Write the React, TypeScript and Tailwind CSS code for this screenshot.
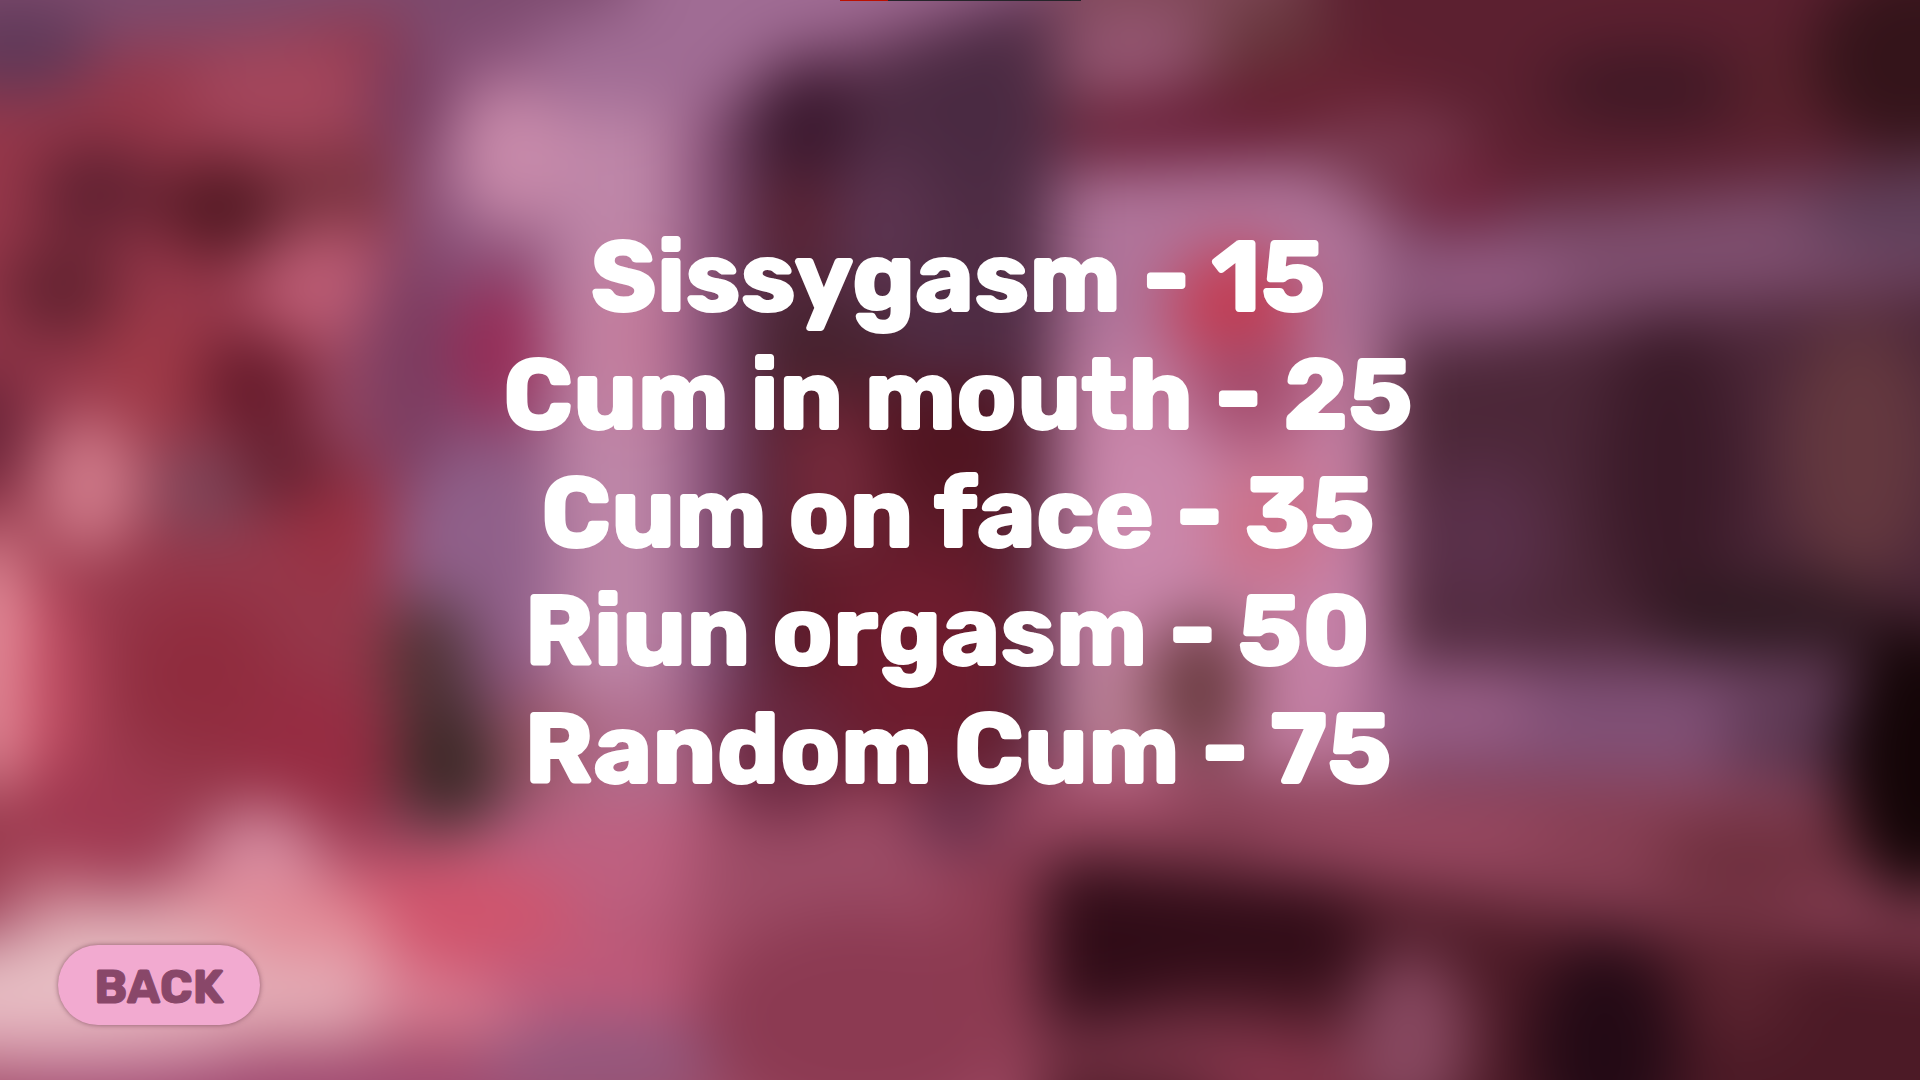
import { useState } from 'react';

type Reward = { label: string; cost: number; tail?: string };
type Blob = [cx: number, cy: number, rx: number, ry: number, color: string];
type Shape = [points: string, color: string];

const rewards: Reward[] = [
    { label: 'Sissygasm', cost: 15 },
    { label: 'Cum in mouth', cost: 25 },
    { label: 'Cum on face', cost: 35 },
    { label: 'Riun orgasm', cost: 50, tail: ' ' },
    { label: 'Random Cum', cost: 75 },
];

// Large areas of the room, back to front
const shapes: Shape[] = [
    // wall
    ['-200,-200 2120,-200 2120,1280 -200,1280', '#8a527a'],
    ['550,-200 760,-200 760,820 550,820', '#be86a8'],
    ['440,-200 1100,-200 1080,-40 760,60 720,110 560,110', '#a06c94'],
    ['380,-200 700,-200 620,10 380,50', '#7c4a6e'],
    ['680,120 780,70 780,820 680,820', '#885078'],
    ['1030,150 1400,150 1400,790 1030,790', '#c480a4'],
    ['1030,150 1400,150 1400,360 1030,360', '#b0749a'],
    // poster
    ['-200,70 200,40 400,10 395,900 -200,1000', '#96374a'],
    // door
    ['738,100 960,20 1055,-10 1055,800 738,800', '#4f2c44'],
    ['765,380 1020,380 1020,800 765,820', '#5c1a28'],
    // shelf
    ['1055,-200 2120,-200 2120,150 1660,200 1400,215 1300,160 1060,170', '#5c2030'],
    ['1055,-200 1330,-200 1300,60 1060,110', '#804858'],
    // beam and screen
    ['1380,230 1640,200 2120,140 2120,270 1640,305 1380,345', '#7e4e6e'],
    ['1385,350 1650,312 2120,265 2120,670 1390,660', '#4c2738'],
    ['1370,665 1850,665 1850,780 1370,760', '#805076'],
    // floor and table
    ['-200,980 240,810 400,830 720,790 1060,770 1060,1280 -200,1280', '#a04a64'],
    ['1050,765 1400,775 1850,780 2120,900 2120,970 1500,915 1050,855', '#883f54'],
    ['1040,856 1320,878 1520,910 2120,970 2120,1280 1040,1280', '#4c1a26'],
    ['1040,860 1350,890 1360,985 1180,985 1120,1030 1040,1020', '#300c17'],
];

// Smaller spots of light and shade
const blobs: Blob[] = [
    [120, -10, 280, 45, '#7c4a6c'],
    [15, 50, 85, 45, '#5e3858'],
    [285, 95, 100, 55, '#a4465c'],
    [96, 190, 62, 46, '#5e2030'],
    [225, 208, 66, 48, '#501822'],
    [330, 190, 66, 40, '#78323f'],
    [62, 290, 60, 50, '#622230'],
    [325, 285, 76, 58, '#bc5c74'],
    [150, 370, 54, 64, '#a03a48'],
    [252, 385, 56, 48, '#641a2a'],
    [360, 395, 44, 64, '#9a4a66'],
    [-20, 430, 50, 66, '#6a2438'],
    [88, 485, 54, 70, '#d07a8a'],
    [205, 490, 54, 46, '#7e465a'],
    [288, 468, 54, 40, '#642030'],
    [345, 530, 52, 50, '#9a3042'],
    [405, 100, 36, 60, '#743a5c'],
    [408, 370, 44, 130, '#7a3c60'],
    [508, 155, 56, 76, '#c88aaa'],
    [500, 350, 48, 76, '#962c56'],
    [635, 340, 44, 90, '#c47c9c'],
    [475, 560, 84, 110, '#90608a'],
    [805, 125, 50, 66, '#3a182e'],
    [980, 110, 80, 80, '#4a2a42'],
    [880, 230, 50, 80, '#5c3450'],
    [798, 225, 34, 60, '#5a2030'],
    [820, 345, 76, 50, '#46222e'],
    [950, 440, 80, 60, '#501420'],
    [835, 480, 44, 80, '#782c3e'],
    [920, 660, 90, 110, '#6e1c2e'],
    [1130, 52, 76, 46, '#955672'],
    [1275, 50, 60, 60, '#68383e'],
    [1180, 130, 120, 34, '#681e36'],
    [1330, 95, 100, 40, '#662030'],
    [1390, 145, 90, 28, '#804058'],
    [1460, 198, 60, 28, '#701e36'],
    [1650, 88, 110, 40, '#3e1824'],
    [1775, 85, 42, 50, '#5a222c'],
    [1920, 60, 110, 100, '#34141a'],
    [1235, 310, 66, 64, '#c43c52'],
    [1250, 390, 64, 56, '#a44c6c'],
    [1150, 520, 70, 100, '#ca88ac'],
    [1270, 525, 60, 62, '#cc7088'],
    [1350, 600, 34, 90, '#c884ac'],
    [1200, 690, 52, 76, '#6c3c42'],
    [1110, 710, 36, 50, '#ba8294'],
    [1480, 285, 90, 34, '#965c84'],
    [1920, 215, 120, 40, '#5c3e58'],
    [1480, 540, 70, 80, '#5a304a'],
    [1670, 470, 70, 160, '#3a1a28'],
    [1860, 450, 76, 130, '#64383f'],
    [1770, 620, 120, 40, '#2c181f'],
    [1450, 705, 90, 36, '#9c6088'],
    [1790, 735, 70, 50, '#5c3852'],
    [1920, 760, 84, 140, '#140507'],
    [-10, 660, 34, 140, '#f09ca8'],
    [50, 700, 36, 130, '#c04c62'],
    [200, 675, 80, 80, '#902c3e'],
    [310, 760, 76, 84, '#962c42'],
    [95, 820, 80, 60, '#a03850'],
    [430, 665, 44, 70, '#4c3234'],
    [452, 765, 58, 66, '#3a2826'],
    [550, 745, 60, 50, '#985464'],
    [640, 750, 70, 60, '#b06c8c'],
    [780, 750, 70, 70, '#6a2840'],
    [600, 865, 160, 66, '#be6080'],
    [800, 870, 120, 50, '#9c4c66'],
    [420, 920, 160, 60, '#d0546c'],
    [262, 860, 62, 56, '#d48ca2'],
    [250, 930, 140, 56, '#e28a96'],
    [130, 960, 130, 56, '#e0aeb6'],
    [40, 1000, 180, 60, '#e8c2c6'],
    [290, 1000, 180, 44, '#e4acb6'],
    [470, 1005, 110, 34, '#d87c92'],
    [50, 890, 60, 20, '#c87888'],
    [60, 1035, 200, 30, '#e4b0bc'],
    [280, 1096, 300, 34, '#a04a74'],
    [590, 980, 110, 44, '#c05a7a'],
    [610, 1060, 130, 44, '#94587e'],
    [960, 815, 54, 40, '#68304c'],
    [860, 1020, 160, 110, '#8c3a52'],
    [990, 950, 40, 110, '#8c3a50'],
    [1110, 795, 90, 28, '#a8506c'],
    [1400, 838, 160, 28, '#9c4a64'],
    [1750, 860, 100, 40, '#6c2e3c'],
    [1180, 1050, 150, 36, '#7a3448'],
    [1290, 1085, 90, 50, '#84344a'],
    [1410, 1040, 60, 90, '#884860'],
    [1605, 1050, 74, 110, '#230a15'],
    [1740, 980, 50, 60, '#5c2430'],
];

const RoomBackdrop = () => (
    <svg
        className="absolute inset-0 -z-10 h-full w-full"
        viewBox="0 0 1920 1080"
        preserveAspectRatio="none"
        aria-hidden="true"
    >
        <defs>
            <filter id="soft" filterUnits="userSpaceOnUse" x="-200" y="-200" width="2320" height="1480" colorInterpolationFilters="sRGB">
                <feGaussianBlur stdDeviation="32" />
            </filter>
        </defs>
        <g filter="url(#soft)">
            {shapes.map(([points, color]) => (
                <polygon key={points} points={points} fill={color} />
            ))}
            {blobs.map(([cx, cy, rx, ry, color]) => (
                <ellipse key={`${cx}-${cy}`} cx={cx} cy={cy} rx={rx} ry={ry} fill={color} />
            ))}
        </g>
    </svg>
);

const ProgressStrip = ({ value }: { value: number }) => (
    <div
        className="mx-auto h-px w-[241px] bg-[#25242a]"
        role="progressbar"
        aria-label="Progress"
        aria-valuenow={value}
        aria-valuemin={0}
        aria-valuemax={100}
    >
        <div className="h-full bg-[#bb0f00]" style={{ width: `${value}%` }} />
    </div>
);

export default function App() {
    const [pressed, setPressed] = useState(false);

    return (
        <div className="relative isolate flex min-h-screen w-full flex-col overflow-hidden bg-[#8a527a] font-['Rubik','Inter',sans-serif]">
            <RoomBackdrop />
            <ProgressStrip value={20} />

            <main className="flex-1 pt-[217px] pr-1">
                <ul className="text-center text-[100px] leading-[118px] font-bold text-white [-webkit-text-stroke:2px_white]">
                    {rewards.map(({ label, cost, tail = '' }) => (
                        <li key={label} className="whitespace-pre">{`${label} - ${cost}${tail}`}</li>
                    ))}
                </ul>
            </main>

            <footer className="px-[58px] pb-[55px]">
                <button
                    type="button"
                    aria-pressed={pressed}
                    onClick={() => setPressed(!pressed)}
                    className="h-20 w-[202px] rounded-full bg-[#f2aad0] pt-1 text-[47px] leading-none font-bold text-[#894769] shadow-[0_0_5px_rgba(90,40,60,0.6)] [-webkit-text-stroke:1px_#894769]"
                >
                    BACK
                </button>
            </footer>
        </div>
    );
}
